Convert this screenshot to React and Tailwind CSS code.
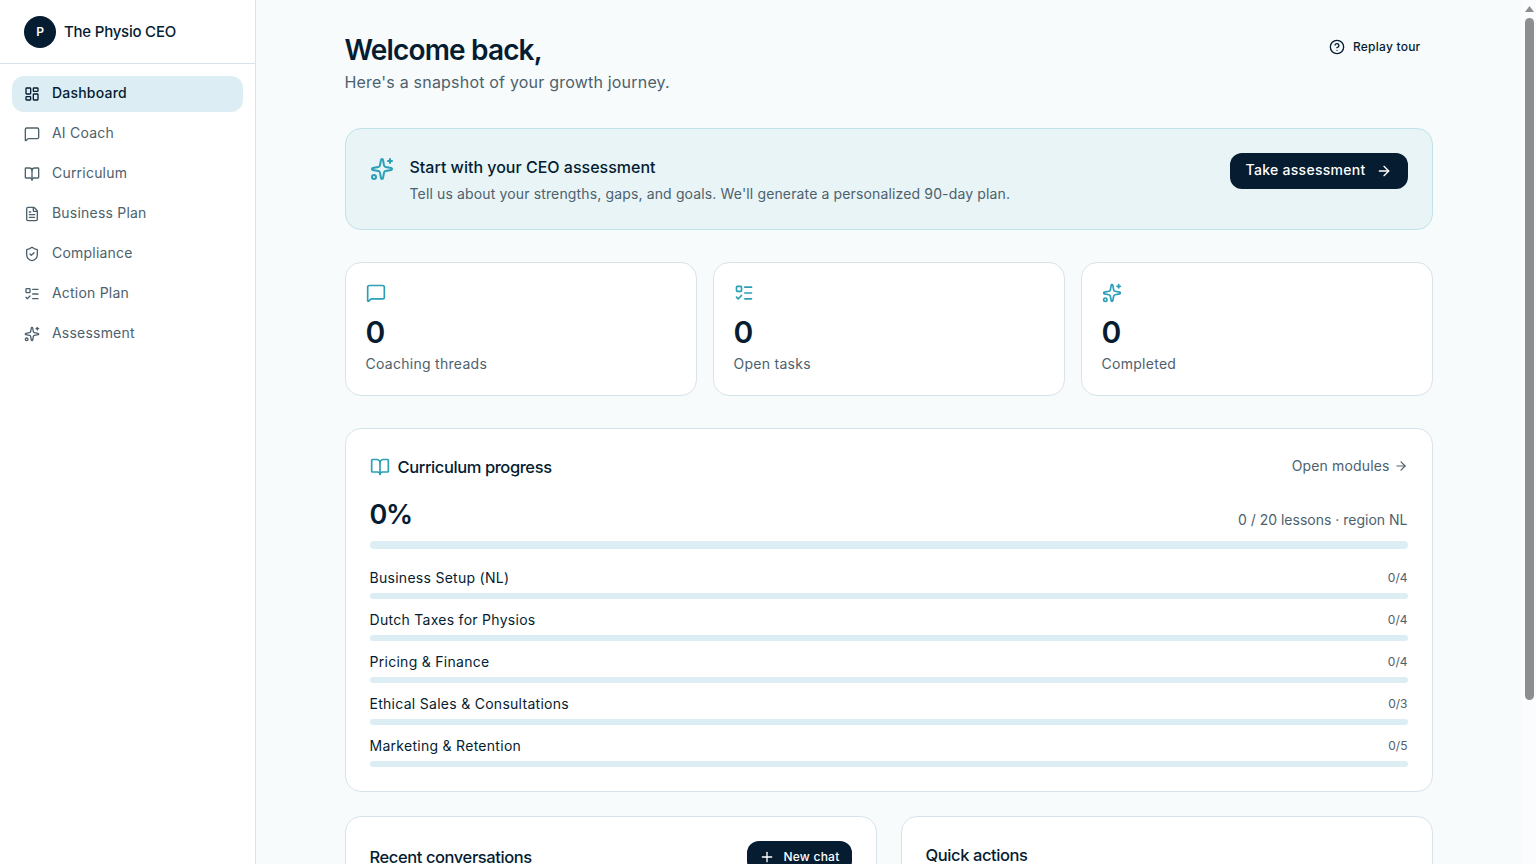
import React from "react"
import { LayoutDashboard, MessageSquare, BookOpen, FileText, ShieldCheck, ListTodo, Sparkles, CircleHelp, ArrowRight, Plus } from "lucide-react"

const NAV = [
  { label: "Dashboard", icon: LayoutDashboard, active: true },
  { label: "AI Coach", icon: MessageSquare },
  { label: "Curriculum", icon: BookOpen },
  { label: "Business Plan", icon: FileText },
  { label: "Compliance", icon: ShieldCheck },
  { label: "Action Plan", icon: ListTodo },
  { label: "Assessment", icon: Sparkles },
]

const STATS = [
  { label: "Coaching threads", icon: MessageSquare },
  { label: "Open tasks", icon: ListTodo },
  { label: "Completed", icon: Sparkles },
]

const MODULES = [
  { name: "Business Setup (NL)", total: 4 },
  { name: "Dutch Taxes for Physios", total: 4 },
  { name: "Pricing & Finance", total: 4 },
  { name: "Ethical Sales & Consultations", total: 3 },
  { name: "Marketing & Retention", total: 5 },
]

export default function App() {
  return (
    <div className="flex h-screen overflow-hidden bg-[#f7fbfc] text-[#051c31] font-['Inter','Liberation_Sans',sans-serif]">
      {/* sidebar */}
      <aside className="w-[256px] shrink-0 border-r border-[#d8e4ea] bg-white">
        <div className="flex h-[64px] items-center gap-2 border-b border-[#d8e4ea] px-6">
          <div className="flex h-8 w-8 items-center justify-center rounded-full bg-[#051c31] text-xs font-semibold text-white">P</div>
          <span className="pt-px text-[15px] font-medium tracking-[-0.015em]">The Physio CEO</span>
        </div>
        <nav className="flex flex-col gap-1 p-3">
          {NAV.map(item => (
            <div key={item.label} className={`flex h-9 items-center gap-3 rounded-xl px-3 text-sm tracking-[0.015em] ${item.active ? "bg-[#dcedf4] font-medium text-[#051c31]" : "text-[#4d616d]"}`}>
              <item.icon size={16} strokeWidth={2} />
              <span className="pb-0.5">{item.label}</span>
            </div>
          ))}
        </nav>
      </aside>

      {/* main */}
      <main className="flex-1 overflow-y-auto">
        <div className="mx-auto max-w-6xl px-8 pt-8 pb-8">
          <div className="flex items-start justify-between">
            <div>
              <h1 className="text-[28px] leading-9 font-semibold tracking-[-0.03em]">Welcome back,</h1>
              <p className="mt-0.5 text-base tracking-[0.0125em] text-[#4d616d]">Here's a snapshot of your growth journey.</p>
            </div>
            <button className="-mt-px flex h-8 items-center gap-2 rounded-lg px-3 text-xs font-medium tracking-[0.02em]">
              <CircleHelp size={16} />
              Replay tour
            </button>
          </div>

          {/* assessment banner */}
          <div className="mt-[34px] flex h-[102px] items-start justify-between rounded-2xl border border-[#bfe3e8] bg-[#e8f4f6] p-6">
            <div className="flex items-start gap-4">
              <Sparkles size={24} className="mt-[4px] text-[#2a9fb5]" />
              <div className="mt-[2px]">
                <div className="text-base font-medium">Start with your CEO assessment</div>
                <div className="mt-[5px] text-sm tracking-[0.01em] text-[#4d616d]">Tell us about your strengths, gaps, and goals. We'll generate a personalized 90-day plan.</div>
              </div>
            </div>
            <button className="flex h-9 items-center gap-2.5 rounded-xl bg-[#051c31] px-4 text-sm font-medium tracking-[0.02em] text-white">
              <span className="pb-0.5">Take assessment</span>
              <ArrowRight size={16} />
            </button>
          </div>

          {/* stats */}
          <div className="mt-8 grid grid-cols-3 gap-4">
            {STATS.map(s => (
              <div key={s.label} className="h-[134px] rounded-2xl border border-[#d8e4ea] bg-white px-5 pt-5 pb-4">
                <s.icon size={20} className="text-[#2a9fb5]" />
                <div className="mt-[11px] text-[30px] leading-9 font-semibold">0</div>
                <div className="mt-1 text-sm tracking-[0.02em] text-[#4d616d]">{s.label}</div>
              </div>
            ))}
          </div>

          {/* curriculum progress */}
          <div className="mt-8 rounded-2xl border border-[#d8e4ea] bg-white p-6">
            <div className="flex h-7 items-center justify-between">
              <div className="flex items-center gap-2">
                <BookOpen size={20} className="text-[#2a9fb5]" />
                <span className="text-[16.5px] font-medium tracking-tight">Curriculum progress</span>
              </div>
              <span className="flex items-center gap-1 pb-0.5 text-sm tracking-[0.01em] text-[#4d616d]">Open modules <ArrowRight size={14} /></span>
            </div>
            <div className="mt-[17px] flex items-end justify-between">
              <span className="text-[27px] leading-[34px] font-semibold tracking-tighter">0%</span>
              <span className="pb-[2px] text-sm text-[#4d616d]">0 / 20 lessons · region NL</span>
            </div>
            <div className="mt-[9px] h-2 rounded-full bg-[#dcedf4]" />
            <div className="mt-[19px] flex flex-col gap-[11px]">
              {MODULES.map(m => (
                <div key={m.name}>
                  <div className="flex items-center justify-between">
                    <span className="text-sm tracking-[0.02em]">{m.name}</span>
                    <span className="text-xs text-[#4d616d]">0/{m.total}</span>
                  </div>
                  <div className="mt-[5px] h-1.5 rounded-full bg-[#dcedf4]" />
                </div>
              ))}
            </div>
          </div>

          <div className="mt-6 grid grid-cols-2 gap-6">
            <div className="h-[240px] rounded-2xl border border-[#d8e4ea] bg-white p-6">
              <div className="flex items-center justify-between">
                <span className="text-[16.5px] font-medium tracking-tight">Recent conversations</span>
                <button className="flex h-8 items-center gap-2 rounded-xl bg-[#051c31] px-3 text-xs font-medium tracking-[0.02em] text-white">
                  <Plus size={16} />
                  New chat
                </button>
              </div>
            </div>
            <div className="h-[240px] rounded-2xl border border-[#d8e4ea] bg-white p-6">
              <span className="text-[16.5px] leading-7 font-medium tracking-tight">Quick actions</span>
            </div>
          </div>
        </div>
      </main>

      {/* scrollbar as the browser showed it */}
      <div className="flex w-[15px] shrink-0 flex-col items-center bg-[#fafcfd] pl-[2px]">
        <svg width="9" height="6" viewBox="0 0 9 6" className="mt-[6px]"><path d="M4.5 0 9 6H0z" fill="#8e8e8e" /></svg>
        <div className="mt-[6px] h-[682px] w-[9px] rounded-full bg-[#8e8e8e]" />
      </div>
    </div>
  )
}
